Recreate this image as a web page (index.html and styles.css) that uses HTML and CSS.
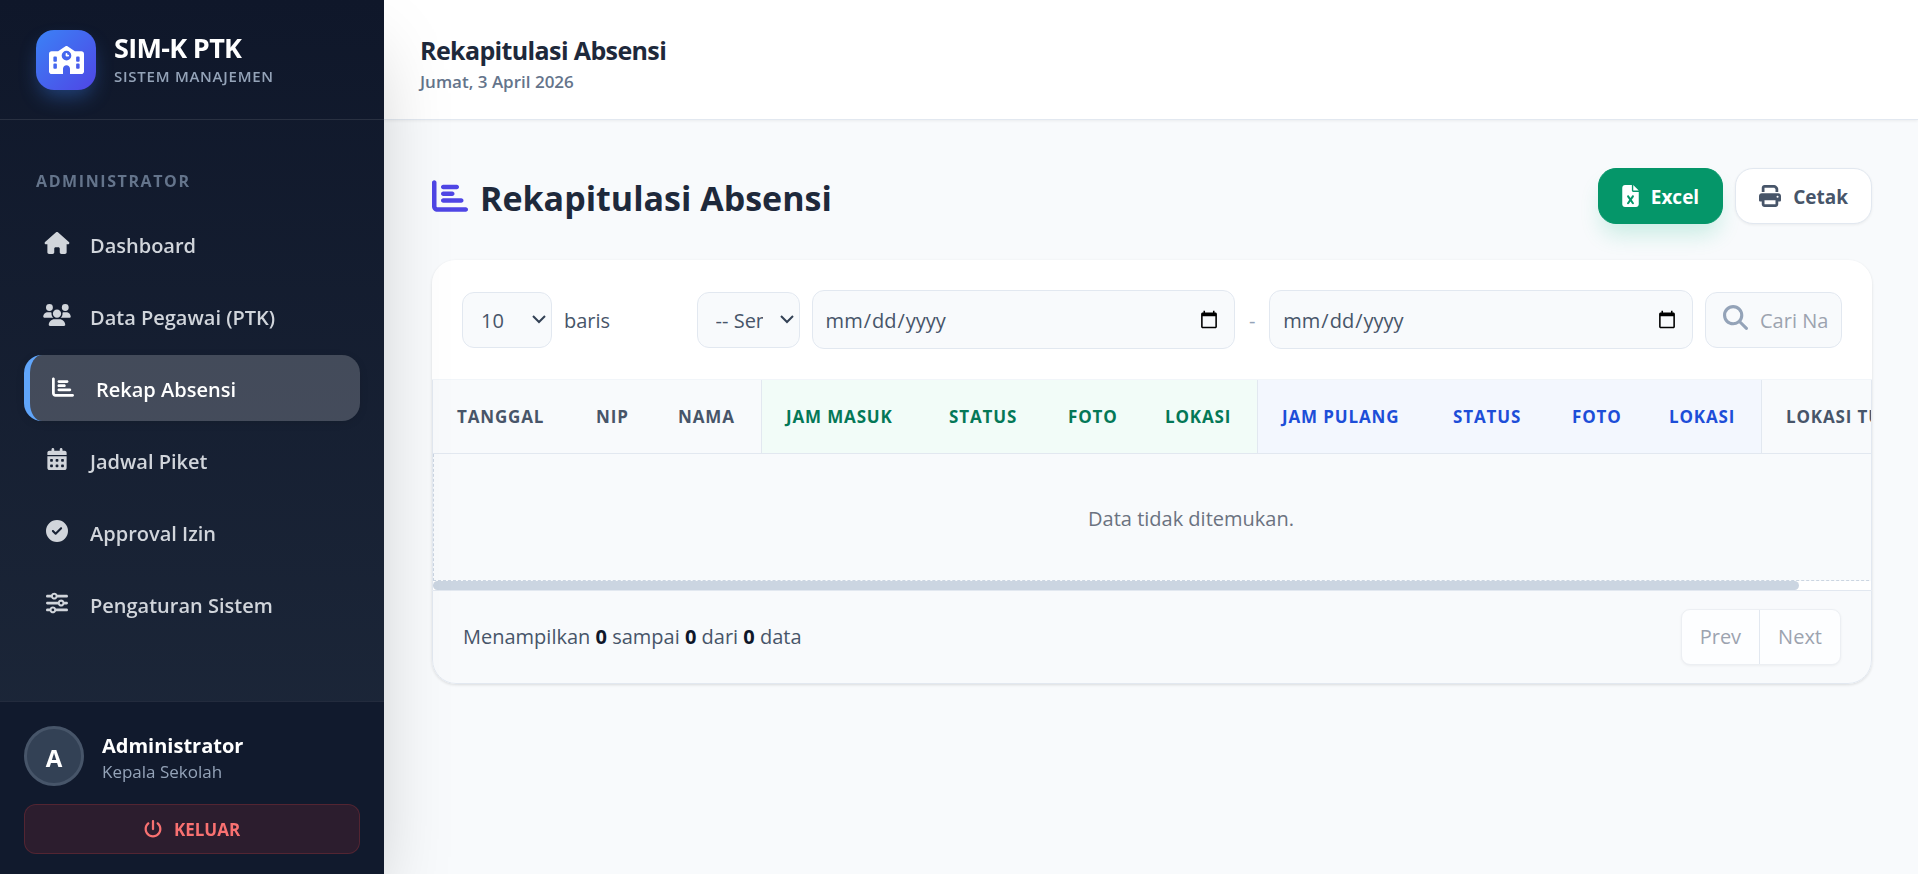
FILE: index.html
```html
<!DOCTYPE html>
<html lang="id">
<head>
<meta charset="utf-8">
<title>Rekapitulasi Absensi - SIM-K PTK</title>
<link rel="stylesheet" href="styles.css">
</head>
<body>
<svg class="sprite" aria-hidden="true">
  <symbol id="i-school" viewBox="0 0 640 512"><path d="M337.800 5.400C327-1.800 313-1.800 302.200 5.400L166.300 96H48C21.500 96 0 117.500 0 144V464c0 26.500 21.500 48 48 48H256V416c0-35.300 28.700-64 64-64s64 28.700 64 64v96H592c26.500 0 48-21.500 48-48V144c0-26.500-21.500-48-48-48H473.700L337.800 5.400zM96 192h32c8.800 0 16 7.200 16 16v64c0 8.800-7.200 16-16 16H96c-8.800 0-16-7.200-16-16V208c0-8.800 7.200-16 16-16zm400 16c0-8.800 7.200-16 16-16h32c8.800 0 16 7.200 16 16v64c0 8.800-7.200 16-16 16H512c-8.800 0-16-7.200-16-16V208zM96 320h32c8.800 0 16 7.200 16 16v64c0 8.800-7.200 16-16 16H96c-8.800 0-16-7.200-16-16V336c0-8.800 7.200-16 16-16zm400 16c0-8.800 7.200-16 16-16h32c8.800 0 16 7.200 16 16v64c0 8.800-7.200 16-16 16H512c-8.800 0-16-7.200-16-16V336zM232 176a88 88 0 1 1 176 0 88 88 0 1 1 -176 0zm88-48c-8.800 0-16 7.200-16 16v32c0 8.800 7.200 16 16 16h32c8.800 0 16-7.200 16-16s-7.200-16-16-16H336V144c0-8.800-7.200-16-16-16z"/></symbol>
  <symbol id="i-home" viewBox="0 0 576 512"><path d="M575.800 255.500c0 18-15 32.100-32 32.100h-32l.7 160.200c0 2.700-.2 5.400-.5 8.100V472c0 22.100-17.900 40-40 40H392c-22.100 0-40-17.900-40-40V384c0-17.700-14.300-32-32-32H256c-17.700 0-32 14.300-32 32v88c0 22.100-17.900 40-40 40H104c-22.100 0-40-17.900-40-40V287.600H32c-18 0-32-14-32-32.100c0-9 3-17 10-24L266.400 8c7-7 15-8 22-8s15 2 21 7L564.800 231.500c8 7 12 15 11 24z"/></symbol>
  <symbol id="i-users" viewBox="0 0 640 512"><path d="M144 0a80 80 0 1 1 0 160A80 80 0 1 1 144 0zM512 0a80 80 0 1 1 0 160A80 80 0 1 1 512 0zM0 298.700C0 239.800 47.800 192 106.700 192h42.700c15.900 0 31 3.500 44.600 9.700c-1.300 7.200-1.900 14.700-1.900 22.300c0 38.200 16.800 72.500 43.300 96H21.300C9.600 320 0 310.400 0 298.700zM405.300 320c26.600-23.500 43.300-57.800 43.300-96c0-7.600-.7-15-1.900-22.300c13.600-6.300 28.700-9.700 44.600-9.700h42.700C592.200 192 640 239.800 640 298.700c0 11.800-9.600 21.300-21.300 21.300H405.300zM224 224a96 96 0 1 1 192 0 96 96 0 1 1 -192 0zM128 485.300C128 411.700 187.700 352 261.300 352H378.700C452.300 352 512 411.700 512 485.300c0 14.700-11.900 26.700-26.700 26.700H154.700c-14.700 0-26.700-11.900-26.700-26.700z"/></symbol>
  <symbol id="i-chart" viewBox="0 0 512 512"><path d="M32 32c17.700 0 32 14.300 32 32V400c0 8.800 7.200 16 16 16H480c17.700 0 32 14.300 32 32s-14.300 32-32 32H80c-44.200 0-80-35.800-80-80V64C0 46.300 14.300 32 32 32zm96 96c0-17.700 14.300-32 32-32l192 0c17.700 0 32 14.300 32 32s-14.300 32-32 32l-192 0c-17.700 0-32-14.300-32-32zm32 64H288c17.700 0 32 14.300 32 32s-14.300 32-32 32H160c-17.700 0-32-14.300-32-32s14.300-32 32-32zm0 96H416c17.700 0 32 14.300 32 32s-14.300 32-32 32H160c-17.700 0-32-14.300-32-32s14.300-32 32-32z"/></symbol>
  <symbol id="i-calendar" viewBox="0 0 448 512"><path fill-rule="evenodd" d="M128 0c17.700 0 32 14.300 32 32V64H288V32c0-17.700 14.300-32 32-32s32 14.300 32 32V64h48c26.500 0 48 21.500 48 48v48H0V112C0 85.500 21.500 64 48 64H96V32c0-17.700 14.300-32 32-32zM0 192H448V464c0 26.500-21.500 48-48 48H48c-26.500 0-48-21.500-48-48V192zM80 256a16 16 0 0 0-16 16v32a16 16 0 0 0 16 16h32a16 16 0 0 0 16-16v-32a16 16 0 0 0-16-16zM208 256a16 16 0 0 0-16 16v32a16 16 0 0 0 16 16h32a16 16 0 0 0 16-16v-32a16 16 0 0 0-16-16zM336 256a16 16 0 0 0-16 16v32a16 16 0 0 0 16 16h32a16 16 0 0 0 16-16v-32a16 16 0 0 0-16-16zM80 384a16 16 0 0 0-16 16v32a16 16 0 0 0 16 16h32a16 16 0 0 0 16-16v-32a16 16 0 0 0-16-16zM208 384a16 16 0 0 0-16 16v32a16 16 0 0 0 16 16h32a16 16 0 0 0 16-16v-32a16 16 0 0 0-16-16zM336 384a16 16 0 0 0-16 16v32a16 16 0 0 0 16 16h32a16 16 0 0 0 16-16v-32a16 16 0 0 0-16-16z"/></symbol>
  <symbol id="i-check" viewBox="0 0 512 512"><path d="M256 512A256 256 0 1 0 256 0a256 256 0 1 0 0 512zM369 209L241 337c-9.400 9.400-24.600 9.400-33.900 0l-64-64c-9.400-9.400-9.400-24.600 0-33.900s24.600-9.400 33.900 0l47 47L335 175c9.400-9.400 24.600-9.400 33.900 0s9.400 24.600 0 33.900z"/></symbol>
  <symbol id="i-sliders" viewBox="0 0 512 512"><path d="M0 416c0 17.700 14.300 32 32 32l54.700 0c12.300 28.300 40.500 48 73.300 48s61-19.700 73.300-48L480 448c17.700 0 32-14.300 32-32s-14.300-32-32-32l-246.700 0c-12.300-28.300-40.500-48-73.300-48s-61 19.700-73.300 48L32 384c-17.700 0-32 14.300-32 32zm128 0a32 32 0 1 1 64 0 32 32 0 1 1 -64 0zM320 256a32 32 0 1 1 64 0 32 32 0 1 1 -64 0zm32-80c-32.800 0-61 19.700-73.300 48L32 224c-17.700 0-32 14.300-32 32s14.300 32 32 32l246.700 0c12.300 28.300 40.500 48 73.300 48s61-19.700 73.300-48l54.700 0c17.700 0 32-14.300 32-32s-14.300-32-32-32l-54.700 0c-12.300-28.300-40.500-48-73.300-48zM192 128a32 32 0 1 1 0-64 32 32 0 1 1 0 64zm73.300-64C253 35.700 224.800 16 192 16s-61 19.700-73.300 48L32 64C14.300 64 0 78.300 0 96s14.300 32 32 32l86.700 0c12.300 28.300 40.500 48 73.300 48s61-19.700 73.300-48L480 128c17.700 0 32-14.300 32-32s-14.300-32-32-32L265.300 64z"/></symbol>
  <symbol id="i-power" viewBox="0 0 512 512"><path d="M288 32c0-17.700-14.300-32-32-32s-32 14.300-32 32V256c0 17.700 14.300 32 32 32s32-14.300 32-32V32zM143.500 120.600c13.600-11.300 15.400-31.500 4.100-45.100s-31.500-15.400-45.100-4.100C49.700 115.400 16 181.800 16 256c0 132.500 107.500 240 240 240s240-107.500 240-240c0-74.200-33.800-140.600-86.600-184.600c-13.600-11.300-33.800-9.400-45.100 4.100s-9.400 33.800 4.100 45.100c38.900 32.300 63.500 81 63.500 135.400c0 97.200-78.800 176-176 176s-176-78.800-176-176c0-54.400 24.700-103.100 63.500-135.400z"/></symbol>
  <symbol id="i-search" viewBox="0 0 512 512"><path d="M416 208c0 45.900-14.900 88.300-40 122.700L502.600 457.400c12.500 12.500 12.500 32.800 0 45.300s-32.800 12.500-45.300 0L330.700 376c-34.400 25.200-76.800 40-122.700 40C93.100 416 0 322.900 0 208S93.100 0 208 0S416 93.100 416 208zM208 352a144 144 0 1 0 0-288 144 144 0 1 0 0 288z"/></symbol>
  <symbol id="i-print" viewBox="0 0 512 512"><path d="M128 0C92.700 0 64 28.700 64 64v96h64V64H354.700L384 93.300V160h64V93.300c0-17-6.700-33.300-18.700-45.300L400 18.700C388 6.700 371.700 0 354.700 0H128zM384 352v96H128V352H384zm64 32h32c17.700 0 32-14.300 32-32V256c0-35.300-28.700-64-64-64H64c-35.300 0-64 28.700-64 64v96c0 17.700 14.300 32 32 32H64v64c0 35.300 28.700 64 64 64H384c35.300 0 64-28.700 64-64V384zM432 248a24 24 0 1 1 0 48 24 24 0 1 1 0-48z"/></symbol>
  <symbol id="i-excel" viewBox="0 0 384 512"><path d="M64 0C28.700 0 0 28.700 0 64V448c0 35.300 28.700 64 64 64H320c35.300 0 64-28.700 64-64V160H256c-17.700 0-32-14.300-32-32V0H64zM256 0V128H384L256 0zM155.700 250.200L192 302.100l36.300-51.900c7.600-10.900 22.600-13.500 33.400-5.900s13.500 22.600 5.900 33.400L221.300 344l46.400 66.200c7.600 10.900 5 25.800-5.900 33.400s-25.800 5-33.400-5.900L192 385.800l-36.300 51.900c-7.600 10.900-22.600 13.500-33.400 5.900s-13.500-22.600-5.900-33.400L162.700 344l-46.400-66.200c-7.600-10.900-5-25.800 5.900-33.400s25.800-5 33.400 5.900z"/></symbol>
</svg>
<div class="app">
  <aside class="sidebar">
    <div class="brand">
      <span class="brand-logo"><svg class="icon-school"><use href="#i-school"/></svg></span>
      <div>
        <div class="brand-name">SIM-K PTK</div>
        <div class="brand-sub">SISTEM MANAJEMEN</div>
      </div>
    </div>
    <nav class="nav">
      <p class="nav-title">ADMINISTRATOR</p>
      <a class="nav-item" href="#"><svg class="nav-icon"><use href="#i-home"/></svg>Dashboard</a>
      <a class="nav-item" href="#"><svg class="nav-icon"><use href="#i-users"/></svg>Data Pegawai (PTK)</a>
      <a class="nav-item nav-active" href="#" aria-current="page"><svg class="nav-icon"><use href="#i-chart"/></svg>Rekap Absensi</a>
      <a class="nav-item" href="#"><svg class="nav-icon"><use href="#i-calendar"/></svg>Jadwal Piket</a>
      <a class="nav-item" href="#"><svg class="nav-icon"><use href="#i-check"/></svg>Approval Izin</a>
      <a class="nav-item" href="#"><svg class="nav-icon"><use href="#i-sliders"/></svg>Pengaturan Sistem</a>
    </nav>
    <div class="account">
      <div class="profile">
        <span class="avatar">A</span>
        <div class="profile-text">
          <div class="profile-name">Administrator</div>
          <div class="profile-role">Kepala Sekolah</div>
        </div>
      </div>
      <button class="logout" type="button"><svg class="icon-small"><use href="#i-power"/></svg>KELUAR</button>
    </div>
  </aside>
  <div class="page">
    <header class="topbar">
      <div class="topbar-title">Rekapitulasi Absensi</div>
      <div class="topbar-date">Jumat, 3 April 2026</div>
    </header>
    <main class="content">
      <div class="heading">
        <h1 class="title"><svg class="title-icon"><use href="#i-chart"/></svg>Rekapitulasi Absensi</h1>
        <div class="actions">
          <button class="btn btn-excel" type="button"><svg class="icon-excel"><use href="#i-excel"/></svg>Excel</button>
          <button class="btn btn-print" type="button"><svg class="icon-print"><use href="#i-print"/></svg>Cetak</button>
        </div>
      </div>
      <section class="card">
        <div class="toolbar">
          <label class="rows"><select class="field select select-rows"><option>10</option><option>25</option><option>50</option></select><span class="rows-text">baris</span></label>
          <div class="filters">
            <select class="field select select-status" aria-label="Status"><option>-- Semua --</option></select>
            <input class="field date" type="date" aria-label="Tanggal awal">
            <span class="dash">-</span>
            <input class="field date" type="date" aria-label="Tanggal akhir">
            <label class="field search"><svg class="icon-search"><use href="#i-search"/></svg><input class="search-input" type="text" placeholder="Cari Nama" aria-label="Cari Nama"></label>
          </div>
        </div>
        <div class="table-wrap">
          <table class="table">
            <colgroup>
              <col class="c-date"><col class="c-nip"><col class="c-name">
              <col class="c-time-in"><col class="c-status"><col class="c-photo"><col class="c-place">
              <col class="c-time-out"><col class="c-status"><col class="c-photo"><col class="c-place">
              <col class="c-duty">
            </colgroup>
            <thead>
              <tr>
                <th>TANGGAL</th><th>NIP</th><th>NAMA</th>
                <th class="in start">JAM MASUK</th><th class="in">STATUS</th><th class="in">FOTO</th><th class="in">LOKASI</th>
                <th class="out start">JAM PULANG</th><th class="out">STATUS</th><th class="out">FOTO</th><th class="out">LOKASI</th>
                <th class="start">LOKASI TUGAS</th>
              </tr>
            </thead>
            <tbody>
              <tr><td class="empty" colspan="12">Data tidak ditemukan.</td></tr>
            </tbody>
          </table>
        </div>
        <div class="scroll-track"><div class="scroll-thumb"></div></div>
        <footer class="card-footer">
          <div>Menampilkan <b>0</b> sampai <b>0</b> dari <b>0</b> data</div>
          <div class="pager">
            <button class="pager-btn" type="button" disabled>Prev</button>
            <button class="pager-btn" type="button" disabled>Next</button>
          </div>
        </footer>
      </section>
    </main>
  </div>
</div>
</body>
</html>
```
FILE: styles.css
```css
* { box-sizing: border-box; }
body {
  margin: 0;
  background: #f8fafc;
  color: #1e293b;
  font: 20px/30px "Open Sans", "Noto Sans", sans-serif;
}
svg { fill: currentColor; flex: none; }
button, input, select { font: inherit; color: inherit; }
.sprite { display: none; }
.app { display: flex; min-height: 100vh; }

/* Sidebar */
.sidebar {
  position: relative;
  z-index: 1;
  flex: 0 0 384px;
  display: flex;
  flex-direction: column;
  background: linear-gradient(#0f172a, #1e293b);
  box-shadow: 0 38px 75px -18px rgba(0, 0, 0, .25);
}
.brand {
  display: flex;
  align-items: center;
  gap: 18px;
  height: 120px;
  padding: 0 36px;
  border-bottom: 1px solid rgba(255, 255, 255, .1);
}
.brand-logo {
  display: grid;
  place-items: center;
  width: 60px;
  height: 60px;
  border-radius: 18px;
  color: #fff;
  background: linear-gradient(135deg, #3b82f6, #4f46e5);
  box-shadow: 0 10px 20px -4px rgba(59, 130, 246, .4);
}
.icon-school { width: 35px; height: 28px; }
.brand-name { color: #fff; font-size: 27px; font-weight: 700; line-height: 32px; letter-spacing: -.025em; }
.brand-sub { color: #94a3b8; font-size: 15px; font-weight: 600; line-height: 24px; letter-spacing: .05em; }
.nav { flex: 1; padding: 49px 24px 24px; }
.nav-title {
  margin: 0 0 18px;
  padding: 0 12px;
  color: #64748b;
  font-size: 16px;
  font-weight: 700;
  line-height: 24px;
  letter-spacing: .1em;
}
.nav-item {
  display: flex;
  align-items: center;
  gap: 18px;
  height: 66px;
  margin-bottom: 6px;
  padding: 3px 18px 0;
  border-radius: 18px;
  color: #d1d5db;
  font-weight: 600;
  text-decoration: none;
}
.nav-icon { width: 30px; height: 22px; margin-bottom: 6px; }
.nav-active {
  border-left: 6px solid #60a5fa;
  background: rgba(255, 255, 255, .2);
  color: #fff;
  box-shadow: 0 2px 8px rgba(0, 0, 0, .1);
}
.account {
  padding: 24px 24px 20px;
  border-top: 1px solid rgba(255, 255, 255, .08);
  background: #111a2d;
}
.profile { display: flex; align-items: center; gap: 18px; margin-bottom: 18px; }
.profile-text { padding-top: 4px; }
.avatar {
  display: grid;
  place-items: center;
  width: 60px;
  height: 60px;
  padding-top: 3px;
  border: 3px solid #475569;
  border-radius: 50%;
  background: #334155;
  color: #fff;
  font-size: 24px;
  font-weight: 700;
}
.profile-name { color: #fff; font-weight: 700; line-height: 28px; }
.profile-role { color: #94a3b8; font-size: 17px; line-height: 24px; }
.logout {
  display: flex;
  align-items: center;
  justify-content: center;
  gap: 12px;
  width: 100%;
  height: 50px;
  padding: 2px 0 0;
  border: 1px solid rgba(239, 68, 68, .2);
  border-radius: 12px;
  background: #2c1d2e;
  color: #f87171;
  font-size: 17px;
  font-weight: 700;
}
.icon-small { width: 18px; height: 18px; margin-bottom: 2px; }

/* Main area */
.page { flex: 1; min-width: 0; }
.topbar {
  height: 120px;
  padding: 32px 36px 0;
  border-bottom: 1px solid #e2e8f0;
  background: #fff;
  box-shadow: 0 1px 3px rgba(0, 0, 0, .06);
}
.topbar-title { font-size: 25px; font-weight: 700; line-height: 36px; letter-spacing: -.025em; }
.topbar-date { color: #64748b; font-size: 17px; font-weight: 600; line-height: 28px; }
.content { padding: 48px 46px 48px 48px; }
.heading { display: flex; align-items: center; justify-content: space-between; margin-bottom: 36px; }
.title { display: flex; align-items: center; gap: 12px; margin: 0; padding-top: 4px; font-size: 34px; font-weight: 700; line-height: 50px; }
.title-icon { width: 36px; height: 36px; margin-bottom: 4px; color: #4f46e5; }
.actions { display: flex; gap: 12px; }
.btn {
  display: flex;
  align-items: center;
  gap: 12px;
  height: 56px;
  padding: 2px 23px 0;
  border: 1px solid #e2e8f0;
  border-radius: 18px;
  background: #fff;
  color: #475569;
  font-size: 19px;
  font-weight: 700;
  box-shadow: 0 1px 3px rgba(0, 0, 0, .06);
}
.btn svg { margin-bottom: 3px; }
.btn-excel {
  border-color: #059669;
  background: #059669;
  color: #fff;
  box-shadow: 0 14px 22px -4px rgba(16, 185, 129, .2);
}
.icon-excel { width: 17px; height: 22px; }
.icon-print { width: 22px; height: 22px; }

/* Card */
.card { border-radius: 24px; overflow: hidden; box-shadow: 0 1px 3px rgba(0, 0, 0, .12); }
.toolbar {
  display: flex;
  align-items: center;
  justify-content: space-between;
  padding: 30px;
  border-bottom: 1px solid #f1f5f9;
  background: #fff;
}
.rows { display: flex; align-items: center; gap: 12px; color: #475569; }
.rows-text { padding-top: 3px; }
.filters { display: flex; align-items: center; gap: 12px; flex: 0 1 83%; }
.field {
  height: 56px;
  border: 1px solid #e2e8f0;
  border-radius: 12px;
  background-color: #f8fafc;
  color: #475569;
}
.select {
  appearance: none;
  padding: 3px 36px 0 18px;
  background-image: url("data:image/svg+xml,%3Csvg xmlns='http://www.w3.org/2000/svg' viewBox='0 0 14 9'%3E%3Cpath d='M1 1l6 6 6-6' fill='none' stroke='%23334155' stroke-width='2'/%3E%3C/svg%3E");
  background-repeat: no-repeat;
  background-position: right 5px center;
  background-size: 14px 9px;
}
.select-rows { width: 90px; }
.select-status { width: 103px; }
.date { flex: 1; min-width: 0; height: 59px; padding: 3px 13px 0 12px; }
.date::-webkit-calendar-picker-indicator { margin-bottom: 3px; }
.dash { width: 10px; padding-top: 3px; text-align: center; color: #94a3b8; }
.search { display: flex; align-items: center; gap: 12px; width: 137px; padding: 0 12px 0 17px; }
.icon-search { width: 25px; height: 25px; margin-bottom: 5px; color: #94a3b8; }
.search-input { flex: 1; width: 0; min-width: 0; padding: 3px 0 0; border: 0; background: none; outline: 0; }
.search-input::placeholder { color: #9ca3af; }
.table-wrap {
  overflow-x: auto;
  scrollbar-width: none;
  border: 1px solid #e2e8f0;
  border-width: 0 1px;
  background: #fff;
}
.table { width: 1516px; table-layout: fixed; border-collapse: separate; border-spacing: 0; white-space: nowrap; }
.c-date { width: 139px; }
.c-nip { width: 82px; }
.c-name { width: 107px; }
.c-time-in { width: 164px; }
.c-time-out { width: 172px; }
.c-status { width: 119px; }
.c-photo { width: 97px; }
.c-place { width: 116px; }
.c-duty { width: 188px; }
.table th {
  height: 74px;
  padding: 0 0 0 24px;
  border-bottom: 1px solid #e2e8f0;
  background: #f8fafc;
  color: #475569;
  font-size: 17px;
  font-weight: 700;
  letter-spacing: .05em;
  text-align: left;
}
.table .start { border-left: 1px solid #e2e8f0; }
.table .in { background: #f2fcf8; color: #047857; }
.table .out { background: #f3f7fe; color: #1d4ed8; }
.empty {
  height: 127px;
  padding: 3px 0 0;
  border: 1px dashed #cbd5e1;
  border-top: 0;
  background: #f8fafc;
  color: #6b7280;
  text-align: center;
}
.scroll-track { border: 1px solid #e2e8f0; border-width: 0 1px; background: #fff; }
.scroll-thumb { width: 95%; height: 9px; border-radius: 9px; background: #cbd5e1; }
.card-footer {
  display: flex;
  align-items: center;
  justify-content: space-between;
  padding: 18px 30px;
  border: 1px solid #e2e8f0;
  border-radius: 0 0 24px 24px;
  background: #f8fafc;
  color: #475569;
}
.card-footer b { color: #0f172a; }
.pager { display: flex; border: 1px solid #eceff3; border-radius: 9px; background: #fdfeff; box-shadow: 0 1px 3px rgba(0, 0, 0, .05); }
.pager-btn { height: 54px; padding: 0 18px; border: 0; background: none; color: #9ca3af; font-weight: 500; }
.pager-btn + .pager-btn { border-left: 1px solid #e2e8f0; }
```
